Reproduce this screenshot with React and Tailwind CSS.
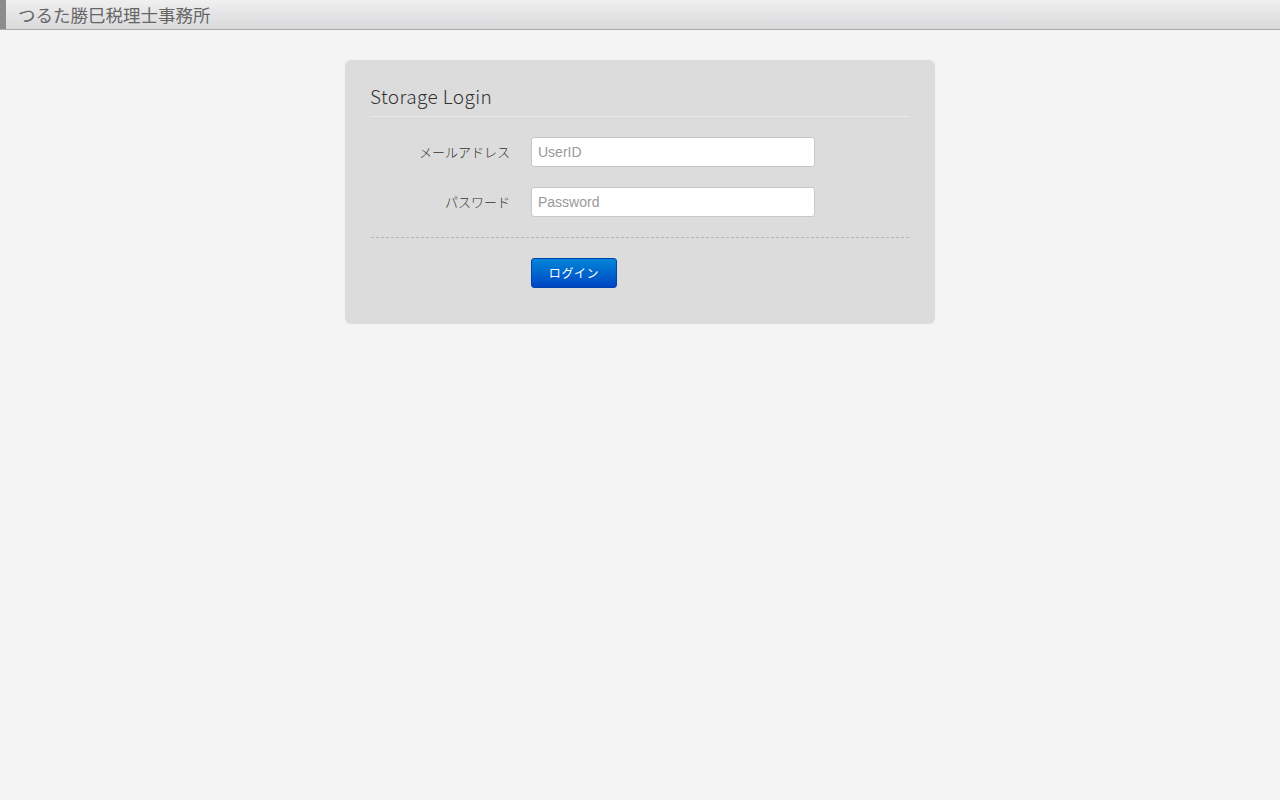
export default function App() {
  return (
    <div className="min-h-[800px] bg-[#f4f4f4] font-['Liberation_Sans','Noto_Sans_CJK_JP',sans-serif]">
      <header className="flex h-[30px] border-b border-[#a9a9a9] bg-gradient-to-b from-[#f0f0f1] to-[#d9d9db]">
        <div className="w-[6px] bg-[#8c8c8c]" />
        <h1 className="pl-3 text-[17.5px] leading-[29px] text-[#666] font-['Noto_Sans_CJK_JP',sans-serif]">
          つるた勝巳税理士事務所
        </h1>
      </header>

      <div className="flex justify-center pt-[30px]">
        <div className="w-[590px] rounded-md bg-[#dcdcdc] px-[26px] pt-[22px] pb-[36px]">
          <h2 className="-ml-[1px] border-b border-[#e8e8e8] pb-[6px] text-[19px] font-light leading-[28px] tracking-[0.4px] text-[#333] font-['Noto_Sans_CJK_JP',sans-serif]">
            Storage Login
          </h2>

          <form className="mt-5 flex flex-col gap-5">
            <div className="flex items-center">
              <label className="w-[140px] pr-[1px] text-right text-[13px] font-light text-[#333] font-['Noto_Sans_CJK_JP',sans-serif]">
                メールアドレス
              </label>
              <input
                type="text"
                placeholder="UserID"
                className="ml-[20px] h-[30px] w-[284px] rounded-[3px] border border-[#c8c8c8] bg-white px-[6px] text-sm text-[#555] placeholder:text-[#999] outline-none"
              />
            </div>
            <div className="flex items-center">
              <label className="w-[140px] pr-[1px] text-right text-[13px] font-light text-[#333] font-['Noto_Sans_CJK_JP',sans-serif]">
                パスワード
              </label>
              <input
                type="password"
                placeholder="Password"
                className="ml-[20px] h-[30px] w-[284px] rounded-[3px] border border-[#c8c8c8] bg-white px-[6px] text-sm text-[#555] placeholder:text-[#999] outline-none"
              />
            </div>
          </form>

          <div className="mt-5 border-t border-dashed border-[#b4b4b4]" />

          <div className="mt-5 pl-[160px]">
            <button
              type="button"
              className="h-[30px] w-[86px] rounded-[3px] border border-[#0044aa] bg-gradient-to-b from-[#0a85d6] to-[#0044c4] text-[12px] tracking-wider text-white font-['Noto_Sans_CJK_JP',sans-serif]"
            >
              ログイン
            </button>
          </div>
        </div>
      </div>
    </div>
  );
}
